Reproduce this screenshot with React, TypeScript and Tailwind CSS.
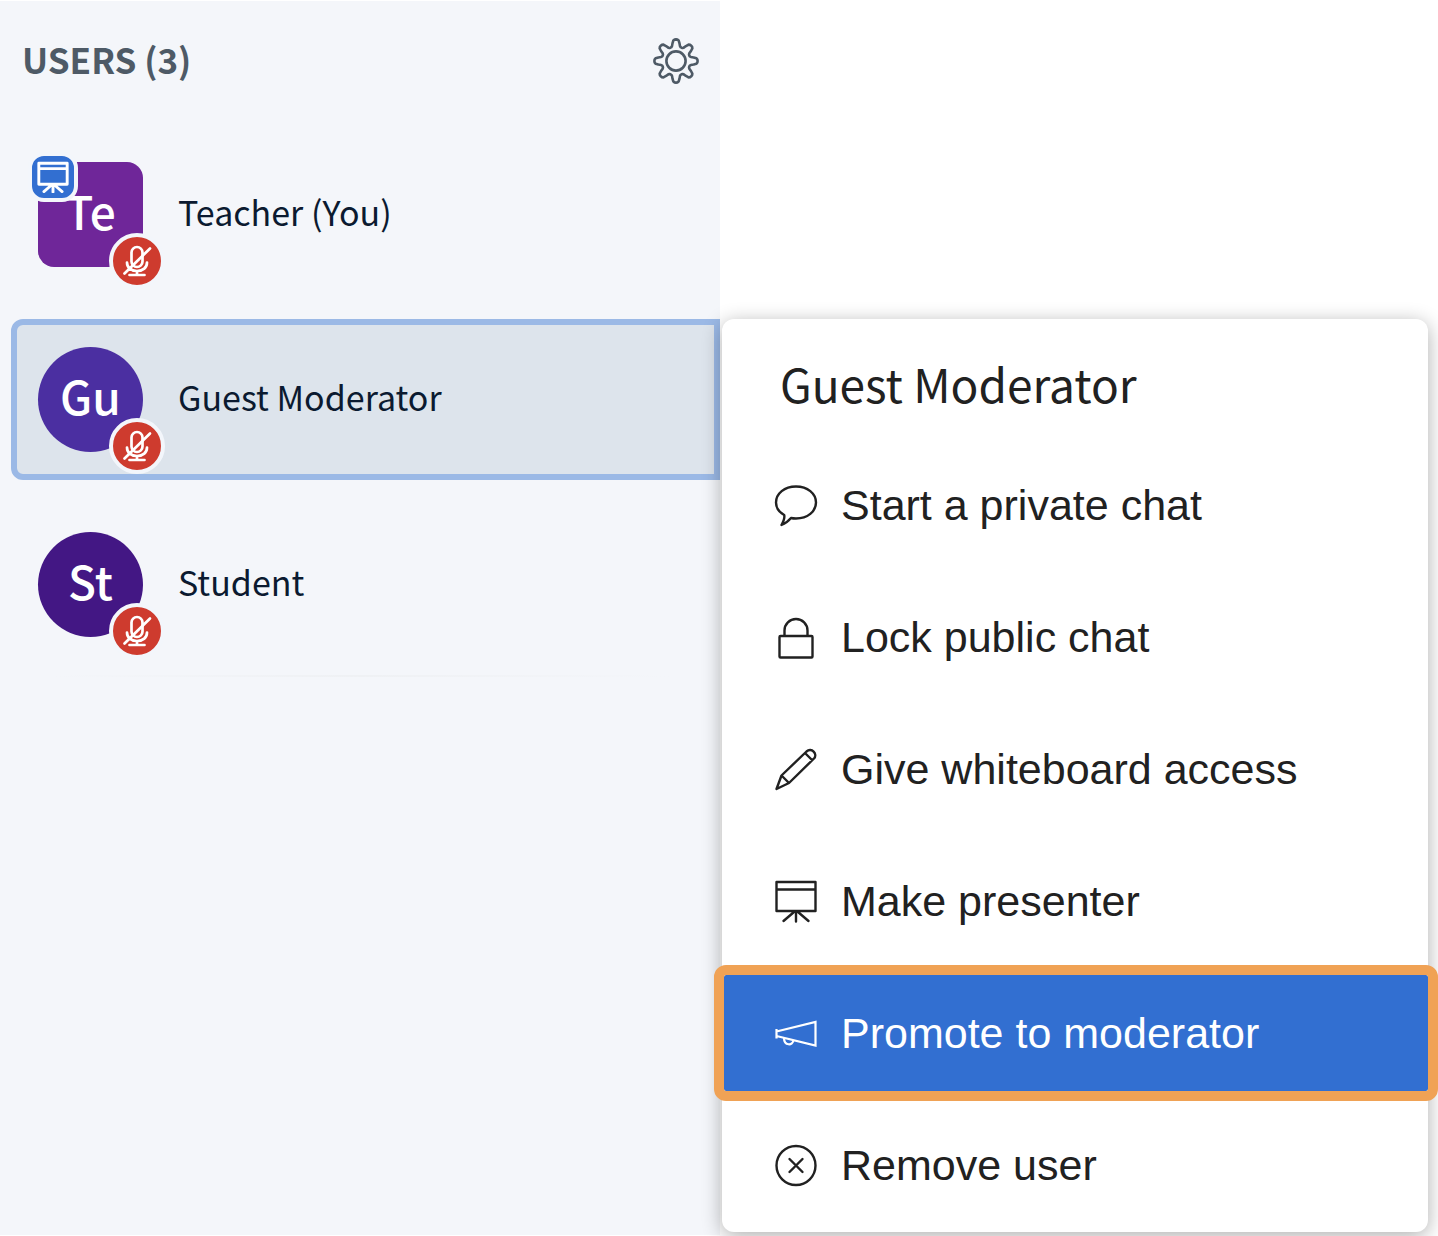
import React from "react";

const sans = "font-['Noto_Sans_CJK_SC','Noto_Sans',sans-serif]";

function GearIcon() {
  const points: string[] = [];
  const steps = 96;
  for (let i = 0; i <= steps; i++) {
    const a = (i / steps) * Math.PI * 2;
    const wave = Math.tanh(1.6 * Math.cos(8 * a)) / Math.tanh(1.6);
    const r = 18 + 3.6 * wave;
    points.push(`${(24 + r * Math.sin(a)).toFixed(2)} ${(24 - r * Math.cos(a)).toFixed(2)}`);
  }
  return (
    <svg className="size-12" viewBox="0 0 48 48" fill="none" stroke="currentColor" strokeWidth="2.6" strokeLinejoin="round" aria-hidden="true">
      <path d={`M${points.join("L")}Z`} />
      <circle cx="24" cy="24" r="9.6" />
    </svg>
  );
}

function BoardIcon({ className, strokeWidth = 2.4 }: { className: string; strokeWidth?: number }) {
  return (
    <svg className={className} viewBox="0 0 44 44" fill="none" stroke="currentColor" strokeWidth={strokeWidth} strokeLinecap="round" strokeLinejoin="round" aria-hidden="true">
      <path d="M2.5 3h39v29h-39zM2.5 10.5h39M22 32.500v10M20 33L9.500 42M24 33l10.500 9" />
    </svg>
  );
}

function MutedIcon() {
  return (
    <svg className="size-8" viewBox="0 0 32 32" fill="none" stroke="currentColor" strokeWidth="2.7" strokeLinecap="round" aria-hidden="true">
      <rect x="10.5" y="2" width="11" height="20" rx="5.5" />
      <path d="M6 17.500c0 5 4 8.500 10 8.500s10-3.500 10-8.500M16 26v4M8.500 30h15M3.500 28.500L29 3.500" />
    </svg>
  );
}

function ChatIcon() {
  return (
    <svg className="size-11" viewBox="0 0 44 44" fill="none" stroke="currentColor" strokeWidth="2.4" strokeLinejoin="round" aria-hidden="true">
      <path d="M22 3.500C10.500 3.500 2 10.500 2 19.500c0 5.500 3.200 9.800 8.200 12.500.8 3-.8 6.500-2.700 10 4-1.500 7-4 9.500-7 1.600.4 3.200.5 5 .5 11.500 0 20-7 20-16s-8.500-16-20-16z" />
    </svg>
  );
}

function LockIcon() {
  return (
    <svg className="size-11" viewBox="0 0 44 44" fill="none" stroke="currentColor" strokeWidth="2.4" aria-hidden="true">
      <rect x="5.5" y="21" width="33" height="21.5" rx="1" />
      <path d="M10.500 21v-5.500a11.500 11.500 0 0 1 23 0V21" />
    </svg>
  );
}

function PencilIcon() {
  return (
    <svg className="size-11" viewBox="0 0 44 44" fill="none" stroke="currentColor" strokeWidth="2.4" strokeLinejoin="round" aria-hidden="true">
      <path d="M2.500 42L7.500 28.500 32.500 4.500c5-4.500 11.500 2.500 7.500 7L15 36zM7.500 28.500l7.500 7.500M31 6l7.500 7.500" />
    </svg>
  );
}

function MegaphoneIcon() {
  return (
    <svg className="size-11" viewBox="0 0 44 44" fill="none" stroke="currentColor" strokeWidth="2.2" aria-hidden="true">
      <path d="M2.500 18v9.500M2.500 20.500L41.500 11v23.500L2.500 25M10 27c0 8 9 8 9.500 2" />
    </svg>
  );
}

function RemoveIcon() {
  return (
    <svg className="size-11" viewBox="0 0 44 44" fill="none" stroke="currentColor" strokeWidth="2.4" strokeLinecap="round" aria-hidden="true">
      <circle cx="22" cy="22.5" r="19.5" />
      <path d="M15.500 16l13 13M28.500 16l-13 13" />
    </svg>
  );
}

type User = { name: string; initials: string; avatar: string; row: string; presenter?: boolean };

const users: User[] = [
  { name: "Teacher (You)", initials: "Te", avatar: "rounded-2xl bg-[#6f2699]", row: "border-transparent", presenter: true },
  { name: "Guest Moderator", initials: "Gu", avatar: "rounded-full bg-[#4b2fa1]", row: "rounded-l-xl border-[#9bb9e6] bg-[#dde4ec]" },
  { name: "Student", initials: "St", avatar: "rounded-full bg-[#431784]", row: "border-transparent" },
];

function UserRow({ user }: { user: User }) {
  return (
    <li>
      <button type="button" className={`flex h-[161px] w-full items-center gap-[35px] border-6 pl-[21px] text-left ${user.row}`}>
        <span className={`relative flex size-[105px] shrink-0 items-center justify-center pb-2.5 text-[46px] leading-none font-medium text-white ${user.avatar}`}>
          {user.initials}
          {user.presenter && (
            <span className="absolute -top-2.5 -left-2.5 flex size-[50px] items-center justify-center rounded-2xl border-4 border-[#f3f6fb] bg-[#326fd1]">
              <BoardIcon className="size-8" strokeWidth={4} />
            </span>
          )}
          <span className="absolute -right-[22px] -bottom-[22px] flex size-14 items-center justify-center rounded-full border-4 border-[#f3f6fb] bg-[#ce3b2e]">
            <MutedIcon />
          </span>
        </span>
        <span className="pb-1.5 text-[34px] leading-[48px] text-[#0b1a30]">{user.name}</span>
      </button>
    </li>
  );
}

const actions = [
  { label: "Start a private chat", icon: <ChatIcon />, active: false },
  { label: "Lock public chat", icon: <LockIcon />, active: false },
  { label: "Give whiteboard access", icon: <PencilIcon />, active: false },
  { label: "Make presenter", icon: <BoardIcon className="size-11" />, active: false },
  { label: "Promote to moderator", icon: <MegaphoneIcon />, active: true },
  { label: "Remove user", icon: <RemoveIcon />, active: false },
];

export default function App() {
  return (
    <div className={`flex min-h-screen overflow-hidden bg-white ${sans}`}>
      <aside className="my-px w-[calc(50%+1px)] shrink-0 bg-[#f4f6fa]">
        <header className="flex h-[120px] items-center justify-between pr-5 pl-[22px] text-[#4e5a66]">
          <h2 className="pb-1 text-[35px] leading-[48px] font-bold">USERS (3)</h2>
          <button type="button" aria-label="Manage users">
            <GearIcon />
          </button>
        </header>
        <ul className="mt-[13px] ml-[11px] flex flex-col gap-6">
          {users.map((user) => (
            <UserRow key={user.name} user={user} />
          ))}
        </ul>
        <div className="mx-[50px] mt-2.5 h-0.5 bg-linear-to-r from-transparent via-[#eff1f4] to-transparent" />
      </aside>

      <section className="relative mt-[319px] mr-2.5 mb-1 ml-0.5 flex-1 self-start rounded-xl bg-white pt-6 pb-[9px] text-[#212121] shadow-[0_4px_20px_rgba(0,0,0,0.32)]">
        <h3 className="px-[58px] text-[46px] leading-[80px]">Guest Moderator</h3>
        <ul className="mt-6 flex flex-col gap-4 font-['Liberation_Sans',Arial,sans-serif]">
          {actions.map((action) => (
            <li key={action.label} className="pl-0.5">
              <button
                type="button"
                className={`flex h-[116px] w-full items-center gap-[23px] pl-[50px] text-left text-[43px] leading-[52px] whitespace-nowrap ${
                  action.active ? "rounded-xs bg-[#326fd1] text-white outline-10 outline-[#f0a255]" : ""
                }`}
              >
                {action.icon}
                <span>{action.label}</span>
              </button>
            </li>
          ))}
        </ul>
      </section>
    </div>
  );
}
